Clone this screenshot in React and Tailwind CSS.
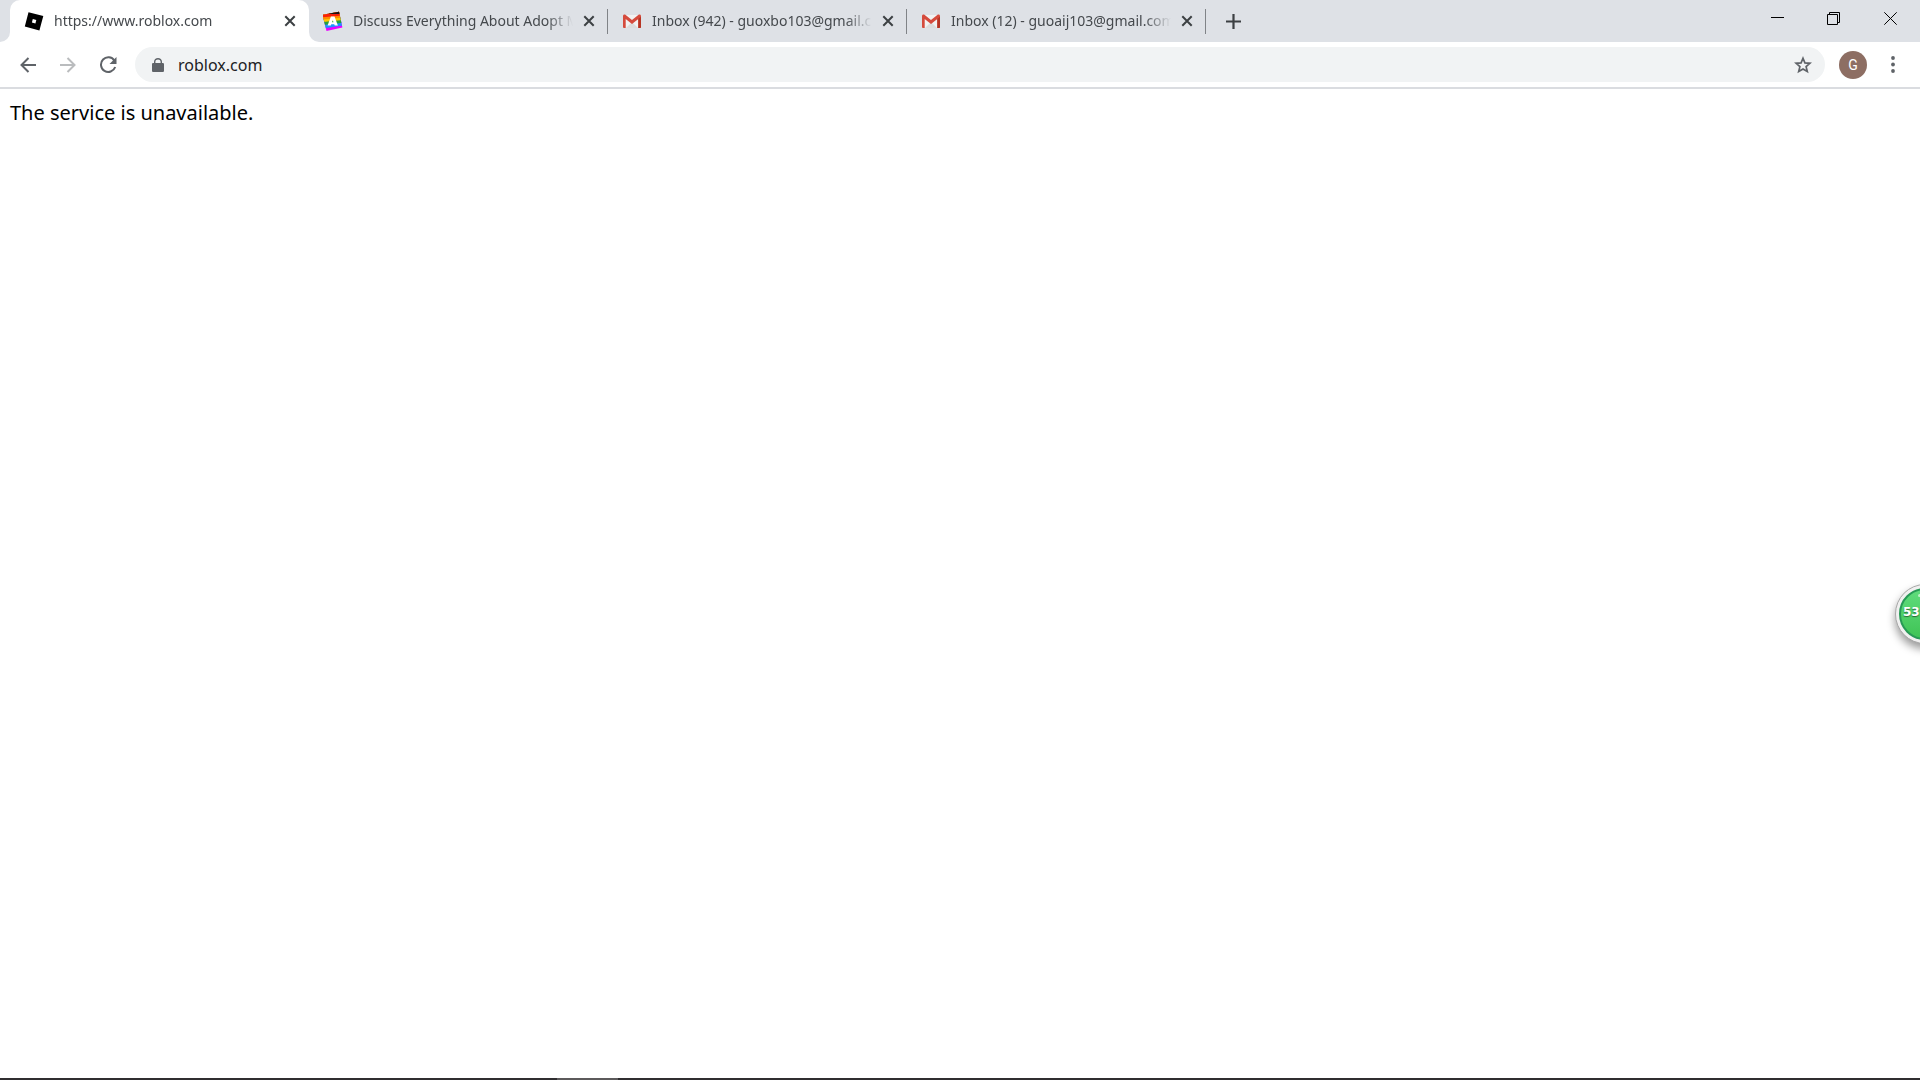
import React, { useState } from 'react';

const initialTabs = [
  { id: 1, title: 'https://www.roblox.com', icon: 'roblox' },
  { id: 2, title: 'Discuss Everything About Adopt Me! Wiki', icon: 'adopt' },
  { id: 3, title: 'Inbox (942) - guoxbo103@gmail.com - Gmail', icon: 'gmail' },
  { id: 4, title: 'Inbox (12) - guoaij103@gmail.com - Gmail', icon: 'gmail' },
];

function Favicon({ name }) {
  if (name === 'roblox') {
    return (
      <svg viewBox="0 0 20 20" className="w-5 h-5 shrink-0">
        <path fill="#000" fillRule="evenodd" d="M4.5 1.2 19.3 5.1 15.4 19.6.8 15.6ZM8.8 8 7.9 11.5 11.4 12.4 12.3 8.9Z" />
      </svg>
    );
  }
  if (name === 'adopt') {
    return (
      <svg viewBox="0 0 20 20" className="w-5 h-5 shrink-0">
        <defs>
          <clipPath id="tile">
            <path d="M-.5 3.800 16 .8 19.400 16.500 3.500 20Z" />
          </clipPath>
        </defs>
        <g clipPath="url(#tile)">
          <path fill="#e800ff" d="M0 0h20v20H0Z" />
          <path fill="#1e90ff" d="M0 0h20v14.500L0 17.500Z" />
          <path fill="#26a03c" d="M0 0h20v11.800L0 14Z" />
          <path fill="#ffc400" d="M0 0h20v9L0 11Z" />
          <path fill="#ff8a00" d="M0 0h20v6.500L0 8.500Z" />
          <path fill="#f8200a" d="M0 0h20v4.500L0 6.300Z" />
          <path fill="#1c1414" d="M6 0h14v3L6 3Z" />
        </g>
        <path fill="#fff" fillRule="evenodd" d="M7.900 5.600h3.600l3.400 9h-3.200l-.5-1.400H8.300l-.5 1.400H4.600ZM9.700 9l-.7 2.200h1.500Z" />
      </svg>
    );
  }
  return (
    <svg viewBox="0 0 20 20" className="w-5 h-5 shrink-0">
      <path fill="#f2f2f2" d="M2 4h16v13H2Z" />
      <path fill="#dcdcdc" d="M4 16.9 10 11l6 5.9Z" />
      <path fill="#d54b3d" d="M1 5c0-.9.6-1.5 1.5-1.5h.6L10 9l6.900-5.500h.6c.9 0 1.500.600 1.500 1.500v10.700c0 .8-.5 1.300-1.300 1.300H16.300V8L10 12.900 3.700 8v9H2.300C1.500 17 1 16.500 1 15.700Z" />
      <path fill="#b63524" d="M16.300 8 19 5.700v10c0 .8-.5 1.300-1.300 1.300h-1.400Z" />
    </svg>
  );
}

function CloseIcon() {
  return (
    <svg viewBox="0 0 12 12" className="w-3 h-3" fill="none" stroke="#3c4043" strokeWidth="2">
      <path d="M1.300 1.300 10.700 10.700M10.700 1.300 1.300 10.700" />
    </svg>
  );
}

function Tab({ tab, active, onSelect, onClose }) {
  return (
    <div className={`relative flex h-full w-[299px] items-center pl-[14px] pr-[9px] ${active ? 'rounded-t-[10px] bg-white' : ''}`}>
      <button type="button" role="tab" aria-selected={active} onClick={onSelect} className="flex min-w-0 flex-1 items-center gap-[10px] text-left">
        <Favicon name={tab.icon} />
        <span className="flex-1 overflow-hidden whitespace-nowrap text-sm leading-5 text-[#45494d] [mask-image:linear-gradient(to_right,black_88%,transparent)]">
          {tab.title}
        </span>
      </button>
      <button type="button" aria-label={`Close ${tab.title}`} onClick={onClose} className="ml-[6px] flex h-5 w-5 items-center justify-center">
        <CloseIcon />
      </button>
      {active ? (
        <span className="absolute bottom-0 left-full h-[10px] w-[10px] bg-white">
          <span className="block h-full rounded-bl-[10px] bg-[#dee1e6]" />
        </span>
      ) : (
        <span className="absolute right-0 top-[9px] h-[25px] w-px bg-[#808387]" />
      )}
    </div>
  );
}

function WindowControls() {
  const stroke = { fill: 'none', stroke: '#000', strokeWidth: 1 };
  return (
    <div className="ml-auto flex h-9">
      <button type="button" aria-label="Minimize" className="flex w-14 items-center justify-center">
        <svg viewBox="0 0 13 13" className="h-[13px] w-[13px]" {...stroke}><path d="M0 5.500h13" /></svg>
      </button>
      <button type="button" aria-label="Restore" className="flex w-14 items-center justify-center">
        <svg viewBox="0 0 13 13" className="h-[13px] w-[13px]" {...stroke}>
          <path d="M.5 2.500h10v10H.5ZM2.500 2.500v-2h10v10h-2" />
        </svg>
      </button>
      <button type="button" aria-label="Close window" className="flex w-[59px] items-center justify-center">
        <svg viewBox="0 0 13 13" className="h-[13px] w-[13px]" {...stroke}><path d="M.3.3l12.400 12.400M12.700.3.3 12.700" /></svg>
      </button>
    </div>
  );
}

function Toolbar() {
  const [url, setUrl] = useState('roblox.com');

  return (
    <div className="flex h-[47px] items-center border-b-2 border-[#dadce0] bg-white pl-2 pr-[7px]">
      <button type="button" aria-label="Back" className="flex w-10 justify-center">
        <svg viewBox="0 0 16 16" className="h-4 w-4" fill="none" stroke="#5f6368" strokeWidth="2">
          <path d="M16 8H1.500M8.500 1 1.500 8l7 7" />
        </svg>
      </button>
      <button type="button" aria-label="Forward" className="flex w-10 justify-center">
        <svg viewBox="0 0 16 16" className="h-4 w-4" fill="none" stroke="#babcbe" strokeWidth="2">
          <path d="M0 8h14.500M7.500 1l7 7-7 7" />
        </svg>
      </button>
      <button type="button" aria-label="Reload" className="flex w-10 justify-center">
        <svg viewBox="0 0 18 18" className="h-[18px] w-[18px]">
          <path fill="none" stroke="#5f6368" strokeWidth="2" d="M15.400 4.600A7.300 7.300 0 1 0 16.200 11" />
          <path fill="#5f6368" d="M17.500 1v7h-7Z" />
        </svg>
      </button>
      <div className="ml-[7px] flex h-[35px] flex-1 items-center rounded-full bg-[#f1f3f4] pl-[17px] pr-[13px]">
        <svg viewBox="0 0 12 14" className="h-[14px] w-3">
          <path fill="#5f6368" fillRule="evenodd" d="M2 5V3.800C2 1.600 3.800.1 6 .1s4 1.500 4 3.700V5h.7c.7 0 1.300.5 1.300 1.200v6.500c0 .7-.6 1.300-1.300 1.300H1.300C.6 14 0 13.400 0 12.700V6.200C0 5.500.6 5 1.300 5Zm1.400 0h5.200V3.800C8.600 2.400 7.400 1.500 6 1.500S3.400 2.400 3.400 3.800Z" />
        </svg>
        <input
          type="text"
          aria-label="Address"
          value={url}
          onChange={(e) => setUrl(e.target.value)}
          className="ml-[14px] min-w-0 flex-1 bg-transparent text-base leading-6 text-[#202124] outline-none"
        />
        <button type="button" aria-label="Bookmark this page">
          <svg viewBox="0 0 18 18" className="h-[18px] w-[18px]" fill="none" stroke="#5f6368" strokeWidth="1.700">
            <path d="M9 2.300 10.900 6.900 15.900 7.300 12.100 10.600 13.300 15.500 9 12.900 4.700 15.500 5.900 10.600 2.100 7.300 7.100 6.900Z" />
          </svg>
        </button>
      </div>
      <button type="button" aria-label="Profile" className="ml-[14px] flex h-7 w-7 items-center justify-center rounded-full bg-[#8d6e63] font-[Roboto,sans-serif] text-sm text-white">
        G
      </button>
      <button type="button" aria-label="Menu" className="ml-[6px] flex w-10 justify-center">
        <svg viewBox="0 0 4 17" className="h-[17px] w-1" fill="#5f6368">
          <circle cx="2" cy="2" r="1.900" />
          <circle cx="2" cy="8.500" r="1.900" />
          <circle cx="2" cy="15" r="1.900" />
        </svg>
      </button>
    </div>
  );
}

function App() {
  const [tabs, setTabs] = useState(initialTabs);
  const [activeId, setActiveId] = useState(1);

  const closeTab = (id) => setTabs(tabs.filter((t) => t.id !== id));

  return (
    <div className="relative flex min-h-screen flex-col overflow-hidden bg-white font-['Noto_Sans','Open_Sans',sans-serif]">
      {/* Tab strip */}
      <header className="flex h-[42px] bg-[#dee1e6]">
        <span className="h-[10px] w-[10px] self-end bg-white">
          <span className="block h-full rounded-br-[10px] bg-[#dee1e6]" />
        </span>
        <div role="tablist" className="flex">
          {tabs.map((tab) => (
            <Tab
              key={tab.id}
              tab={tab}
              active={tab.id === activeId}
              onSelect={() => setActiveId(tab.id)}
              onClose={() => closeTab(tab.id)}
            />
          ))}
        </div>
        <button type="button" aria-label="New tab" className="ml-[7px] flex w-10 items-center justify-center">
          <svg viewBox="0 0 15 15" className="h-[15px] w-[15px]" stroke="#3c4043" strokeWidth="2.200">
            <path d="M0 7.500h15M7.500 0v15" />
          </svg>
        </button>
        <WindowControls />
      </header>

      <Toolbar />

      <main className="flex-1 p-[10px]">
        <p className="text-xl leading-7 text-black">The service is unavailable.</p>
      </main>

      {/* Top edge of the taskbar */}
      <footer className="flex h-[2px] bg-[#302e30]">
        <span className="ml-[29%] h-full w-[61px] bg-[#5c5a5b]" />
      </footer>

      {/* Floating memory meter, half off the screen */}
      <button
        type="button"
        aria-label="Memory usage"
        className="absolute -right-[35px] top-[584px] h-[60px] w-[60px] rounded-full border border-[#a9a9a9] bg-[#f0f0f0] p-[3px] shadow-[0_5px_9px_rgba(0,0,0,0.4)]"
      >
        <span className="flex h-full w-full items-center rounded-full border-2 border-[#279a56] bg-linear-to-b from-[#5fdc7c] to-[#3fc455] pb-1 pl-[2px] font-['DejaVu_Sans',sans-serif] text-xs font-bold text-white [text-shadow:0_1px_1px_rgba(0,0,0,0.5)]">
          53%
        </span>
        <span className="absolute left-[22px] top-[9px] h-[3px] w-[3px] rounded-full bg-white/60" />
      </button>
    </div>
  );
}

export default App;
